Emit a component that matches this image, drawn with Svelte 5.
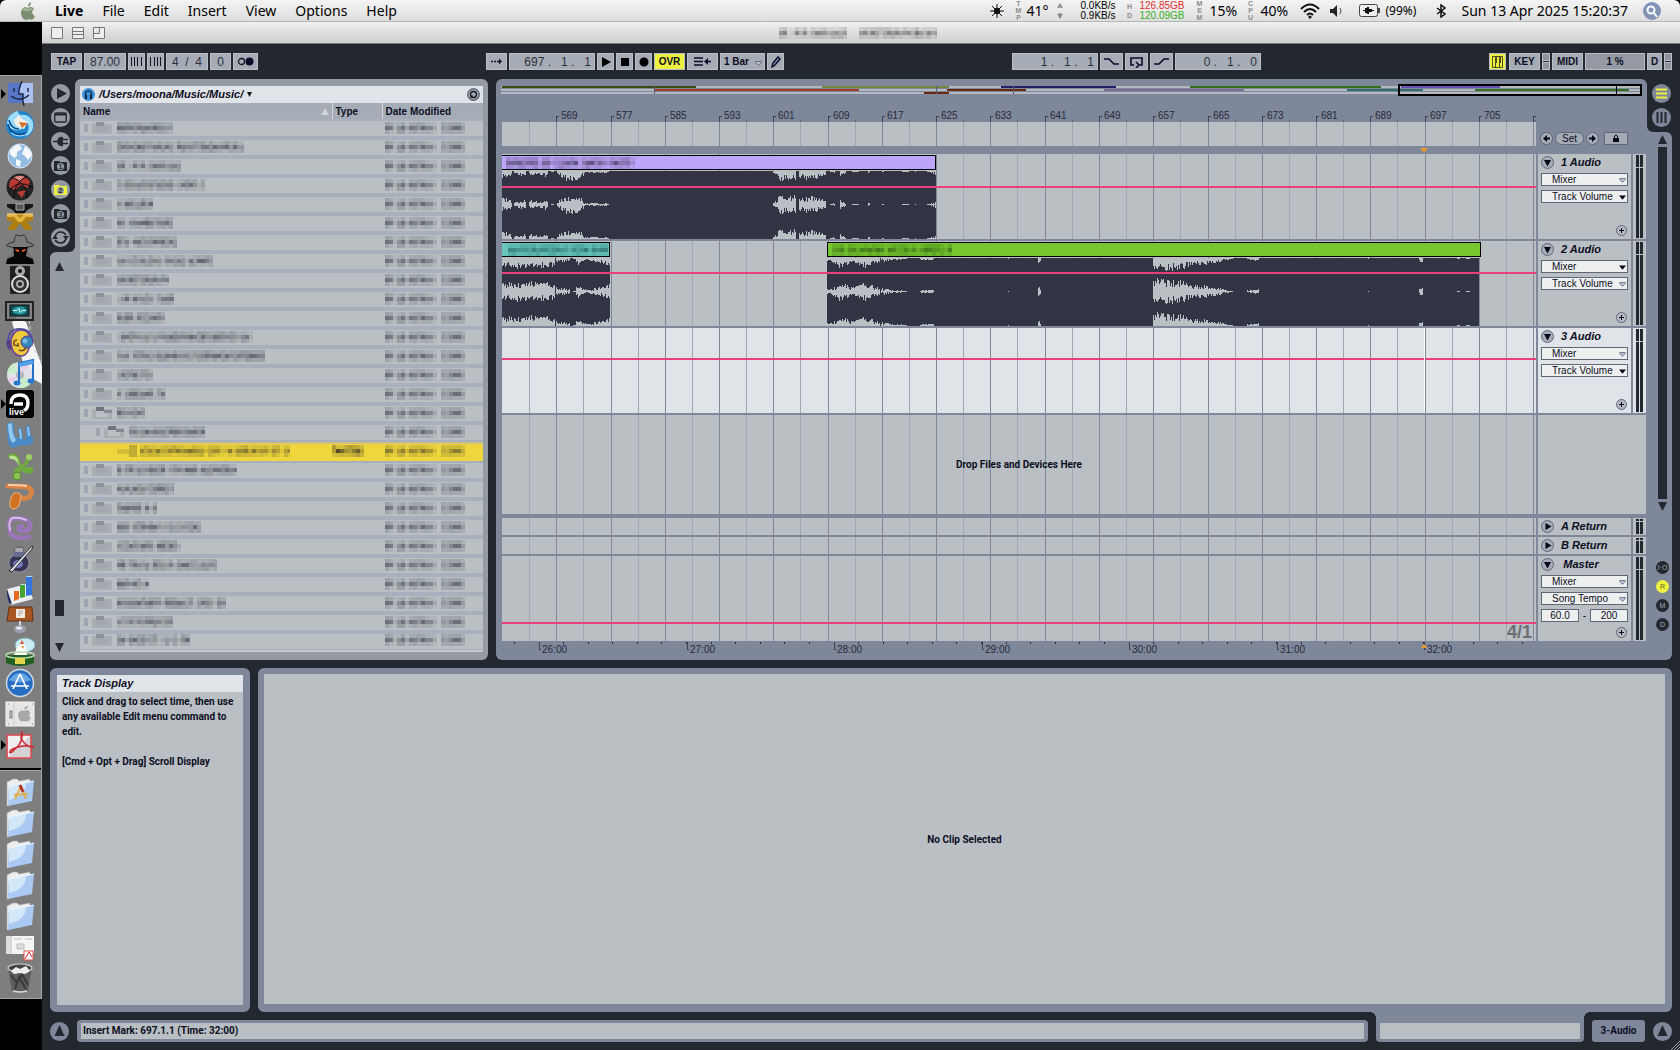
<script>
    const menus = ["File", "Edit", "Insert", "View", "Options", "Help"];

    // width, folder state and indent of every blurred browser entry
    const nameWidths = [
        56, 127, 64, 88, 36, 56, 60, 96, 52, 57, 48, 136, 148, 36, 49, 28, 76,
        150, 120, 57, 40, 84, 64, 100, 32, 109, 56, 73,
    ];
    const files = nameWidths.map((width, i) => ({
        width,
        indent: i === 16 ? 12 : i === 17 ? 33 : 0,
        open: i === 15 || i === 16,
        selected: i === 17,
    }));

    function noise(n) {
        const v = Math.sin(n * 127.1 + 11.7) * 43758.5453;
        return v - Math.floor(v);
    }

    function mosaic(width, seed, strength = 0.55) {
        const cells = [];
        for (let x = 0; x < width; x += 4) {
            const gap = noise(seed * 31 + x * 3) > 0.9 ? 0.35 : 1;
            for (let row = 0; row < 3; row++) {
                const base = row === 1 ? strength : strength * 0.4;
                const o = base * gap * (0.35 + 0.65 * noise(seed * 7 + x * 1.3 + row * 17));
                cells.push({ x, y: row * 4, w: Math.min(4, width - x), o: o.toFixed(2) });
            }
        }
        return cells;
    }

    const SPAN = 1034;
    const pct = (x, span = SPAN) => `${(x / span) * 100}%`;

    const bars = Array.from({ length: 20 }, (_, i) => ({
        x: Math.round(i * 54.27),
        label: i > 0 && i < 19 ? 561 + i * 8 : "",
    }));
    const barLabels = bars.filter((b) => b.label && b.label <= 705);

    const minutes = [26, 27, 28, 29, 30, 31, 32].map((m, i) => ({
        x: Math.round(37 + i * 147.5),
        label: `${m}:00`,
    }));
    const seconds = Array.from({ length: 42 }, (_, i) => Math.round(12 + i * 24.58));

    // waveform envelopes: [from, to, start level, end level]
    const waveA = [
        [0, 10, 9, 4], [12, 24, 3, 6], [27, 36, 5, 4], [36, 46, 3, 7], [49, 52, 1, 1],
        [55, 62, 3, 9], [62, 76, 10, 10], [76, 82, 9, 5], [82, 107, 2, 2],
        [271, 276, 2, 9], [276, 294, 10, 10], [297, 310, 8, 9], [310, 324, 9, 6],
        [328, 333, 1, 2], [338, 344, 7, 2], [350, 357, 1, 2], [366, 368, 2, 2],
        [380, 382, 1, 1], [400, 407, 1, 1], [413, 414, 1, 1], [425, 430, 1, 2],
        [430, 434, 2, 5],
    ];
    const waveB = [
        [0, 20, 10, 11], [20, 53, 12, 10], [54, 68, 5, 3], [71, 74, 1, 1], [74, 79, 8, 8],
        [79, 92, 4, 3], [92, 101, 5, 6], [101, 108, 7, 10],
    ];
    const waveC = [
        [0, 12, 3, 8], [12, 23, 10, 7], [23, 40, 5, 11], [40, 53, 9, 4], [54, 80, 4, 1],
        [93, 107, 2, 3], [181, 182, 1, 1], [211, 214, 7, 3], [326, 342, 15, 13],
        [342, 358, 13, 12], [358, 372, 10, 7], [372, 398, 8, 3], [398, 406, 3, 1],
        [420, 432, 2, 3], [541, 542, 1, 1], [592, 596, 5, 4], [630, 633, 1, 1], [639, 643, 1, 1],
    ];

    function wavePath(segments, seed) {
        let d = "";
        for (const [from, to, a, b] of segments) {
            for (let x = from; x < to; x++) {
                const level = a + ((b - a) * (x - from)) / Math.max(1, to - from);
                const peak = (n) => Math.max(1, Math.round(level * (0.35 + 0.65 * noise(n))));
                const up = peak(x + seed);
                const down = peak(x * 3 + seed);
                d += `M${x} ${34 - up}h1v${up + down - 1}h-1z`;
                d += `M${x} 0h1v${down}h-1z`;
                d += `M${x} ${68 - up}h1v${up}h-1z`;
            }
        }
        return d;
    }

    const tracks = [
        {
            name: "1 Audio",
            device: "Mixer",
            param: "Track Volume",
            live: "param",
            line: "line-a",
            clips: [{ x: 0, w: 434, body: 434, color: "violet", label: 129, labelX: 4, wave: waveA }],
        },
        {
            name: "2 Audio",
            device: "Mixer",
            param: "Track Volume",
            live: "device",
            line: "line-b",
            clips: [
                { x: 0, w: 108, body: 108, color: "teal", label: 100, labelX: 6, wave: waveB },
                { x: 325, w: 654, body: 652, color: "green", label: 120, labelX: 4, wave: waveC },
            ],
        },
        {
            name: "3 Audio",
            device: "Mixer",
            param: "Track Volume",
            live: "param",
            line: "line-c",
            selected: true,
            clips: [],
        },
    ];

    const overview = [
        [0, 1, 194, "#3c4a12"], [0, 321, 127, "#76863f"], [0, 500, 115, "#242067"],
        [0, 689, 191, "#34701c"], [0, 900, 99, "#6a51b4"], [1, 154, 204, "#9e3d20"],
        [1, 446, 79, "#68290f"], [1, 603, 140, "#7b6b97"], [1, 846, 76, "#2f6c6c"],
        [1, 974, 154, "#34701c"], [2, 423, 25, "#68290f"],
    ];

    const browserTabs = ["play", "device", "plug", "1", "2", "3", "swap"];
    const dockApps = [
        "finder", "fox", "globe", "red", "cross", "spy", "speaker", "tv", "ghost", "tunes",
        "live", "word", "excel", "power", "entourage", "ink", "charts", "keynote", "can",
        "store", "prefs", "pdf",
    ];
    const dockFiles = ["apps", "folder", "folder", "folder", "folder", "doc", "trash"];
    const running = ["finder", "live", "pdf"];
</script>

{#snippet blur(width, seed, strength)}
    <svg class="blur" width={width} height="12" aria-hidden="true" shape-rendering="crispEdges">
        {#each mosaic(width, seed, strength) as c}
            <rect x={c.x} y={c.y} width={c.w} height="4" opacity={c.o} />
        {/each}
    </svg>
{/snippet}

{#snippet grid()}
    <svg class="grid" viewBox="0 0 1034 10" preserveAspectRatio="none" shape-rendering="crispEdges">
        {#each bars as bar}
            <rect x={bar.x + 27} y="0" width="1" height="10" fill="#a1a7ae" />
            {#if bar.x}
                <rect x={bar.x} y="0" width="1" height="10" fill="#7f879b" />
            {/if}
        {/each}
    </svg>
{/snippet}

{#snippet fold(open)}
    <svg viewBox="0 0 13 13" width="13" height="13">
        <circle cx="6.5" cy="6.5" r="6" fill="#a5acb6" stroke="#5f6779" />
        <path d={open ? "M3 4h7L6.500 10.500z" : "M4.500 3v7L10.500 6.500z"} fill="#05051c" />
    </svg>
{/snippet}

{#snippet plus()}
    <button class="bare plus" aria-label="Add lane">
        <svg viewBox="0 0 11 11" width="11" height="11">
            <circle cx="5.500" cy="5.500" r="5" fill="#b4bac2" stroke="#5f6779" />
            <path d="M3 5.500h5M5.500 3v5" stroke="#05051c" />
        </svg>
    </button>
{/snippet}

{#snippet chooser(value, label, live)}
    <label class="chooser">
        <select aria-label={label}><option>{value}</option></select>
        <svg viewBox="0 0 7 5" width="7" height="5">
            {#if live}
                <path d="M0 0.500h7L3.500 4.800z" fill="#05051c" />
            {:else}
                <path d="M0.700 0.500h5.600v1L3.500 4.400 0.700 1.500z" fill="#b9c4d4" stroke="#5f6779" stroke-width="0.8" />
            {/if}
        </svg>
    </label>
{/snippet}

{#snippet dockIcon(name)}
    <svg viewBox="0 0 30 30" width="30" height="30">
        {#if name === "finder"}
            <path d="M3 4h25v20H3z" fill="#5676c8" />
            <path d="M17 4C14 11 14 15 15 16h4q-1 5-1 8h10V4z" fill="#a9c0f0" />
            <path d="M17 2c-3 7-4 10-3 13h4q-1 6 1 12M9 9v4M23 9v4M6 17q9 7 18-1" fill="none" stroke="#1b223d" stroke-width="1.4" />
        {:else if name === "fox"}
            <circle cx="15" cy="15" r="14" fill="#2184cc" />
            <path d="M2 13Q3 4 12 1l3 4q9-2 13 7 2 10-8 15 6-8 2-15-4 10-12 8-6-1-8-7z" fill="#9bdcff" />
            <path d="M9 10l5-5 3 4 6 3-4 7-8-3z" fill="#f5efe5" /><path d="M14 12l9 1-6 5z" fill="#d8742c" />
            <path d="M3 14q3 12 14 10M5 20q7 7 16 3M4 10q2 9 10 9" fill="none" stroke="#074b93" stroke-width="1.500" />
            <path d="M6 23q9 6 17 0" fill="none" stroke="#bfeaff" />
        {:else if name === "globe"}
            <circle cx="15" cy="15" r="12" fill="#93bbe4" stroke="#d7e6f6" />
            <path d="M5 9q6-6 10-5l2 4-5 3v4l-3 2-4-4zM20 5q6 4 7 9l-4 5-3-4-3-2zM11 18l5 2-1 6-4-2z" fill="#f4f8fc" />
        {:else if name === "red"}
            <circle cx="15" cy="15" r="13.500" fill="#242424" />
            <path d="M5 9q9-10 20 0l-2 7-7-3-6 5-6-3zM12 20l9-2-4 8z" fill="#b93a35" />
            <path d="M8 6q6-4 12-1l-5 4z" fill="#e48a84" />
            <path d="M3 19Q15 6 28 16M7 5q16 7 15 21M22 4Q8 11 9 27" fill="none" stroke="#0a0a0a" stroke-width="1" />
        {:else if name === "cross"}
            <path d="M2 1h26v3l-6 3-3 4h-8L8 7 2 4z" fill="#151515" /><path d="M11 1h8v6h-8z" fill="#555" stroke="#aaa" />
            <path d="M2 11h26v7h-6l6 9h-8l-5-7-5 7H2l6-9H2z" fill="#b07f14" />
            <path d="M2 11h9l4 4 4-4h9v3h-7l-4 5h-4l-4-5H2z" fill="#e3b440" /><path d="M2 11h26" stroke="#ffe08a" />
        {:else if name === "spy"}
            <path d="M9 8q1-8 3-7l3 1 3-1q3 0 4 7 8 2 6 4-13 4-26 0-2-2 7-4z" fill="#7b7b7b" stroke="#333" />
            <path d="M8 13h15l-2 9 7 3 1 5H1l1-5 7-3z" fill="#060606" /><path d="M10 15l4 1v2l-3-1zM21 15l-4 1v2l3-1z" fill="#ff5a21" />
            <path d="M8 14q2 7-6 10M23 14q-2 7 5 10" fill="none" stroke="#666" />
        {:else if name === "speaker"}
            <rect x="5" y="1" width="20" height="28" rx="1" fill="#202020" />
            <circle cx="15" cy="6" r="5" fill="#a9a9a9" /><circle cx="15" cy="6" r="2" fill="#111" />
            <circle cx="15" cy="19" r="9" fill="#ddd" /><circle cx="15" cy="19" r="7" fill="#333" />
            <circle cx="15" cy="19" r="4" fill="#aaa" /><circle cx="15" cy="19" r="2" fill="#222" />
        {:else if name === "tv"}
            <rect x="1" y="6" width="27" height="18" fill="#858585" stroke="#222" stroke-width="2" />
            <rect x="5" y="9" width="19" height="11" fill="#0e4c52" stroke="#111" />
            <ellipse cx="14.500" cy="14.500" rx="7" ry="4" fill="#2b9aa0" />
            <path d="M8 14.500h4l2-2 1 4 2-2h4" fill="none" stroke="#dff" stroke-width="1" /><path d="M4 22h8" stroke="#333" stroke-dasharray="1 1" />
        {:else if name === "ghost"}
            <path d="M7 10Q10 2 17 3q9 1 8 12-1 13-8 14-8 0-10-8-2-6 0-11z" fill="#f0cc3d" stroke="#6d4298" stroke-width="1.500" />
            <path d="M4 17Q1 2 15 2q12 0 12 13" fill="none" stroke="#56519c" stroke-width="2" />
            <circle cx="22" cy="15" r="6" fill="#3784bb" stroke="#5a3b88" /><circle cx="20" cy="14" r="2.500" fill="#75b8e5" />
            <path d="M4 13q-2 5 2 9" fill="none" stroke="#5a3b88" stroke-width="4" />
            <path d="M12 13q-4 0-3 5l4 1v-3M14 23q4 2 7-2" fill="none" stroke="#73461d" stroke-width="1.500" />
        {:else if name === "tunes"}
            <circle cx="15" cy="17" r="13" fill="#dfe3e7" /><path d="M15 17L2 15q2-8 7-10zM15 17l11 8q-5 6-12 5z" fill="#c9eccb" />
            <path d="M15 17L3 21l2 4zM15 17L20 5l4 3z" fill="#eccbed" /><circle cx="15" cy="17" r="4" fill="#b5b6be" />
            <path d="M14 25V5l14-3v21" fill="none" stroke="#2470c6" stroke-width="2" /><path d="M14 7l14-3" stroke="#53a2ea" stroke-width="4" />
            <ellipse cx="12" cy="25" rx="3.500" ry="2.500" fill="#2879cf" /><ellipse cx="26" cy="23" rx="3.500" ry="2.500" fill="#2879cf" />
        {:else if name === "live"}
            <rect x="1" y="1" width="28" height="28" rx="3" fill="#050505" />
            <path d="M6 15q0-9 9-9 8 0 8 8 0 8-7 8M9 15h9" fill="none" stroke="#fff" stroke-width="3.400" />
            <text x="4" y="26" class="live-text">live</text>
        {:else if name === "word"}
            <path d="M2 3l6-1 2 15 4 1-1-10h4l1 11 3 1V6h4l1 10q3 2 2 6-3 4-9 3l-6 1q-5 3-8 1Q2 22 2 3z" fill="#4a8ac6" />
            <path d="M3 4l4-1q0 11 4 17-3 5-5 1Q3 14 3 4zM14 9h2l1 10h-2zM22 7h2l1 9h-2z" fill="#8fc5ee" />
        {:else if name === "excel"}
            <path d="M3 4q8-4 11 3l2 7q4-1 5-7 3-5 6-2 2 4-3 5-1 5-6 6h10v6q-7 2-12-3-2 6-7 4-1-6 5-7-3-11-10-9z" fill="#6fa941" />
            <path d="M4 5q7-2 9 4l1 6q-3-8-9-7z" fill="#b9e38a" /><circle cx="12" cy="25" r="4" fill="#86c04f" stroke="#58882f" /><circle cx="24" cy="6" r="3" fill="#9dd168" />
        {:else if name === "power"}
            <path d="M3 4q12 0 19 1 6 2 4 8-2 4-9 3" fill="none" stroke="#d98444" stroke-width="5" stroke-linecap="round" />
            <path d="M3 3q12 0 19 1" fill="none" stroke="#f8cfa8" stroke-width="2" />
            <path d="M9 11q8-1 7 4l-2 9q-6 6-9 0-1-8 4-13z" fill="#cf7224" stroke="#f3b57b" />
        {:else if name === "entourage"}
            <path d="M24 24Q7 27 5 19T6 6Q17 4 23 8q4 4 1 8-6 4-10 1-1-4 3-4" fill="none" stroke="#9a76b8" stroke-width="4.600" stroke-linecap="round" stroke-linejoin="round" />
            <path d="M5 17Q3 9 7 5q8-1 14 2" fill="none" stroke="#d9c0ea" stroke-width="1.800" stroke-linecap="round" />
        {:else if name === "ink"}
            <ellipse cx="14" cy="19" rx="10" ry="9" fill="#353552" stroke="#8b8ba6" /><ellipse cx="14" cy="6" rx="5" ry="3" fill="#a5a8b3" stroke="#555" />
            <path d="M9 8h11v5H9z" fill="#686b8f" /><ellipse cx="13" cy="20" rx="5" ry="4" fill="#7a7ac0" /><path d="M4 27L26 3l2-1-1 3L7 28z" fill="#d9dfe8" stroke="#333" />
        {:else if name === "charts"}
            <path d="M2 14l20-5 6 15-22 6z" fill="#eceef1" /><path d="M2 14l5 15-3-1-2-8z" fill="#293060" />
            <path d="M9 16h5v8l-5 2z" fill="#e66b20" /><path d="M15 10h5v12l-5 1z" fill="#44a42d" /><path d="M21 2h6v18l-6 1z" fill="#3275df" />
            <path d="M21 2l1-1h6l-1 1zM15 10l1-1h5l-1 1z" fill="#b3d8ff" />
        {:else if name === "keynote"}
            <path d="M4 1h23l1 14H2z" fill="#a85722" stroke="#633112" /><path d="M11 3h9v9h-9z" fill="#f2ede3" />
            <path d="M13 5h5M13 7h5M13 9h3" stroke="#aaa" />
            <path d="M14 15h2v5h-2z" fill="#d7d8df" /><ellipse cx="15" cy="23" rx="6" ry="4" fill="#9ea2b1" /><ellipse cx="14" cy="22" rx="3" ry="1.500" fill="#e9e9f2" />
        {:else if name === "can"}
            <ellipse cx="20" cy="8" rx="10" ry="7" fill="#c9ebf4" stroke="#7eaeb9" /><path d="M9 18l3-8 5-4 4 4 1 8z" fill="#fff" /><path d="M15 7l2-4 2 4z" fill="#e25435" /><path d="M16 9h3l-1 3z" fill="#e8962e" />
            <path d="M1 18v8q14 6 28 0v-8z" fill="#216022" /><ellipse cx="15" cy="18" rx="14" ry="3" fill="none" stroke="#b9d7ac" stroke-width="1.500" /><path d="M10 21h10v6H10z" fill="#e3d64b" />
        {:else if name === "store"}
            <circle cx="15" cy="15" r="13.500" fill="#276dc2" stroke="#d1d9e3" stroke-width="1.500" /><path d="M4 12q11-14 22 0-11 5-22 0z" fill="#67a4e4" />
            <path d="M15 6L8 21M15 6l7 15M6 18h18" fill="none" stroke="#fff" stroke-width="1.700" />
        {:else if name === "prefs"}
            <rect x="1" y="3" width="28" height="24" fill="#e6e6e6" stroke="#f5f5f5" /><path d="M9 3v24" stroke="#ccc" /><rect x="5" y="12" width="2" height="7" fill="#ddd" stroke="#777" />
            <path d="M19 10q1-3 4-3-1 4-4 3zm0 2q5-3 6 2-2 3 1 5-3 5-7 3-5 2-6-6 1-6 6-4z" fill="#a8a8a8" />
            <path d="M3 5h1M27 5h1M3 25h1M27 25h1" stroke="#777" />
        {:else if name === "pdf"}
            <path d="M2 5h24v23H2z" fill="#d5d2d6" stroke="#dd4a50" stroke-width="1.500" /><path d="M3 6h22L3 27z" fill="#f0eef0" />
            <path d="M17 1q1 8-3 14L7 22q-4 2-1-2 10-6 23-3-8 1-13-9z" fill="none" stroke="#c92e35" stroke-width="1.600" />
        {:else if name === "doc"}
            <path d="M1 4h28v18H1z" fill="#f5f5f5" /><path d="M1 4h4v18H1z" fill="#ddd" /><path d="M6 4v18M9 7h8M20 7h7M12 12h7v5h-7z" fill="#ddd" stroke="#bbb" />
            <rect x="19" y="19" width="9" height="9" fill="#fff" stroke="#e34b4f" /><path d="M20 27l4-7 3 5" fill="none" stroke="#c33" />
        {:else if name === "trash"}
            <path d="M3 5h24l-4 23q-8 3-16 0z" fill="#5d5d5d" /><path d="M6 12l6 8 5-9 6 11M10 26l4-12 7 12" fill="none" stroke="#3a3a3a" stroke-width="2" />
            <ellipse cx="15" cy="5" rx="12" ry="4" fill="#444" stroke="#d2d2d2" stroke-width="1.200" /><path d="M6 8l5-4 4 2 6-3 4 5-5 3-5-1-6 1z" fill="#eee" />
            <path d="M8 28q7 2 14 0" fill="none" stroke="#ddd" stroke-width="1.500" />
        {:else}
            <path d="M2 5l6-3h4l2 2 11-2v4L4 12v17H2z" fill="#ededed" stroke="#aaa" stroke-width="0.600" />
            <path d="M4 9l25-5-2 20L3 29z" fill="#abcaf3" /><path d="M4 9l17-3q0 13-17 17z" fill="#d2e8f9" /><path d="M4 9l25-5" stroke="#edf7ff" />
            {#if name === "apps"}
                <path d="M16 9l-6 13M9 18l14-1" fill="none" stroke="#dfae50" stroke-width="2" /><path d="M16 9l5 13" stroke="#dfae50" stroke-width="2" /><path d="M15 8l3 7" stroke="#b5332d" stroke-width="3" />
            {/if}
        {/if}
    </svg>
{/snippet}

<div class="desktop">
    <header class="menubar">
        <nav>
            <a class="apple" href="#apple" aria-label="Apple menu">
                <svg viewBox="0 0 14 18" width="14" height="18">
                    <path d="M7 5Q7 1 10 0q0 4-3 5zM7 6c3-2 5-1 6 1-3 2-2 6 1 7-1 3-3 5-6 3-5 3-8-2-8-6s3-7 7-5z" fill="#7b8f70" />
                    <path d="M1 8q3-4 6-1 3-2 5 0-5 4-11 1z" fill="#a3b39a" />
                </svg>
            </a>
            <a class="app" href="#live">Live</a>
            {#each menus as menu}<a href="#{menu}">{menu}</a>{/each}
        </nav>
        <div class="status-items">
            <svg viewBox="0 0 14 14" width="14" height="14">
                <circle cx="7" cy="7" r="3.200" fill="#111" /><path d="M7 0v14M0 7h14M2 2l10 10M12 2L2 12" stroke="#111" />
            </svg>
            <span class="stack">T<br />M<br />P</span><span class="temp">41°</span>
            <svg viewBox="0 0 8 16" width="8" height="16"><path d="M4 0l3 5H5L4 4 3 5H1zM4 16l3-5H5v-1H3v1H1z" fill="#8c8c8c" /></svg>
            <span class="pair net"><span>0.0KB/s</span><span>0.9KB/s</span></span>
            <span class="stack hd">H<br />D</span>
            <span class="pair disk"><span class="used">126.85GB</span><span class="free">120.09GB</span></span>
            <span class="stack mem">M<br />E<br />M</span><span class="pctg">15%</span>
            <span class="stack cpu">C<br />P<br />U</span><span class="pctg">40%</span>
            <svg class="wifi" viewBox="0 0 20 16" width="20" height="16">
                <path d="M1 6q9-9 18 0M4 9q6-6 12 0M7 12q3-3 6 0" fill="none" stroke="#111" stroke-width="2" /><circle cx="10" cy="14" r="1.600" fill="#111" />
            </svg>
            <svg class="sound" viewBox="0 0 13 14" width="13" height="14"><path d="M0 5h3l4-4v12L3 9H0z" fill="#222" /><path d="M10 4q2 3 0 6" fill="none" stroke="#555" /></svg>
            <svg class="battery" viewBox="0 0 22 13" width="22" height="13">
                <rect x="0.500" y="0.500" width="18" height="12" rx="2" fill="#eee" stroke="#444" /><path d="M20 4v5" stroke="#444" stroke-width="2" />
                <path d="M4 6h2V4h2V3h2v2h3v1h2v1h-2v1h-3v2H8V9H6V7H4z" fill="#111" />
            </svg>
            <span class="charge">(99%)</span>
            <svg class="bt" viewBox="0 0 10 14" width="10" height="14"><path d="M1 4l8 6-4 3V1l4 3-8 6" fill="none" stroke="#111" stroke-width="1.500" /></svg>
            <time>Sun 13 Apr 2025 15:20:37</time>
            <button class="bare" aria-label="Search">
                <svg viewBox="0 0 18 18" width="18" height="18"><circle cx="9" cy="9" r="9" fill="#8293b8" /><circle cx="8" cy="8" r="3.500" fill="none" stroke="#fff" stroke-width="2" /><path d="M11 11l3 4" stroke="#fff" stroke-width="2" /></svg>
            </button>
        </div>
    </header>

    <div class="screen">
        <aside class="dock">
            <svg class="wallpaper" viewBox="0 0 42 80" width="42" height="80">
                <path d="M12 4q8-5 14 0l16 44v18Q31 60 26 56z" fill="#f6f6f6" /><path d="M29 2l4 28 9 14" fill="none" stroke="#ccc" stroke-dasharray="4 2" />
            </svg>
            {#each dockApps as app}
                <a href="#{app}" class="dock-item" class:running={running.includes(app)} aria-label={app}>{@render dockIcon(app)}</a>
            {/each}
            <hr />
            {#each dockFiles as item}
                <a href="#{item}" class="dock-item" aria-label={item}>{@render dockIcon(item)}</a>
            {/each}
        </aside>

        <main class="window">
            <div class="titlebar">
                <svg viewBox="0 0 54 12" width="54" height="12" fill="#eee" stroke="#777">
                    <path d="M0.500 0.500h11v11H0.500z" /><path d="M21.500 0.500h11v11h-11zM21.500 4.500h11M21.500 7.500h11" /><path d="M42.500 0.500h11v11h-11zM42.500 6.500h6v-6" />
                </svg>
                <div class="doc-title">{@render blur(68, 3, 0.5)}{@render blur(78, 9, 0.5)}</div>
            </div>

            <div class="toolbar">
                <div class="tools">
                    <button class="w31">TAP</button>
                    <input class="w42" aria-label="Tempo" value="87.00" />
                    <button class="w17" aria-label="Nudge down"><svg viewBox="0 0 13 9" width="13" height="9"><path d="M1.500 0v9M4.500 0v9M7.500 0v9M11.500 0v9" stroke="#15161f" /></svg></button>
                    <button class="w17" aria-label="Nudge up"><svg viewBox="0 0 13 9" width="13" height="9"><path d="M1.500 0v9M5.500 0v9M8.500 0v9M11.500 0v9" stroke="#15161f" /></svg></button>
                    <input class="w42" aria-label="Signature" value="4  /  4" />
                    <input class="w21" aria-label="Groove" value="0" />
                    <button class="w25" aria-label="Metronome"><svg viewBox="0 0 17 9" width="17" height="9"><circle cx="4.500" cy="4.500" r="3" fill="none" stroke="#15161f" stroke-width="1.300" /><circle cx="12.500" cy="4.500" r="4" fill="#0b0b2a" /></svg></button>
                </div>
                <div class="tools">
                    <button class="w21" aria-label="Follow"><svg viewBox="0 0 13 9" width="13" height="9"><path d="M1 4.500h2M4 4.500h2M7 4.500h3" stroke="#15161f" stroke-width="1.500" /><path d="M9 1.500l3 3-3 3z" fill="#15161f" /></svg></button>
                    <input class="w86 pos" aria-label="Position" value="697 .   1 .   1" />
                    <button class="w17" aria-label="Play"><svg viewBox="0 0 10 10" width="10" height="10"><path d="M1 0l9 5-9 5z" /></svg></button>
                    <button class="w17" aria-label="Stop"><svg viewBox="0 0 10 10" width="10" height="10"><path d="M1 1h8v8H1z" /></svg></button>
                    <button class="w17" aria-label="Record"><svg viewBox="0 0 10 10" width="10" height="10"><circle cx="5" cy="5" r="4.500" /></svg></button>
                    <button class="w31 on">OVR</button>
                    <button class="w31" aria-label="Back to arrangement"><svg viewBox="0 0 17 9" width="17" height="9"><path d="M0 1h9M0 4.500h9M0 8h9M12 4.500h5" stroke="#0b0b2a" stroke-width="1.600" /><path d="M14 1v7l-4-3.500z" fill="#0b0b2a" /></svg></button>
                    <label class="quant">
                        <select aria-label="Quantization"><option>1 Bar</option></select>
                        <svg viewBox="0 0 7 5" width="7" height="5"><path d="M0.700 0.500h5.600v1L3.500 4.400 0.700 1.500z" fill="#b9c4d4" stroke="#5f6779" /></svg>
                    </label>
                    <button class="w17" aria-label="Draw"><svg viewBox="0 0 10 12" width="10" height="12"><path d="M1 11l1-4 5-6 2 2-5 6z" fill="#8891b4" stroke="#0b0b2a" stroke-width="1.500" /></svg></button>
                </div>
                <div class="tools">
                    <input class="w86 pos" aria-label="Loop start" value="1 .   1 .   1" />
                    <button class="w23" aria-label="Punch in"><svg viewBox="0 0 15 9" width="15" height="9" fill="none" stroke="#0b0b2a" stroke-width="1.600"><path d="M0 2h5l5 5h5" /></svg></button>
                    <button class="w23" aria-label="Loop"><svg viewBox="0 0 15 12" width="15" height="12" fill="none" stroke="#0b0b2a" stroke-width="1.600"><path d="M5 9H2V2h11v7h-3M7 6l3 3-3 3" /></svg></button>
                    <button class="w23" aria-label="Punch out"><svg viewBox="0 0 15 9" width="15" height="9" fill="none" stroke="#0b0b2a" stroke-width="1.600"><path d="M0 7h5l5-5h5" /></svg></button>
                    <input class="w86 pos" aria-label="Loop length" value="0 .   1 .   0" />
                </div>
                <div class="tools">
                    <button class="w17 on keys" aria-label="Computer keyboard"><svg viewBox="0 0 11 12" width="11" height="12"><path d="M0.500 0.500h10v11H0.500zM3.500 6v6M7.500 6v6" fill="none" stroke="#4c4e1e" /><path d="M3 1h2v6H3zM7 1h2v6H7z" fill="#4c4e1e" /></svg></button>
                    <button class="w31">KEY</button><i class="io"></i>
                    <button class="w31">MIDI</button>
                    <output class="w60">1 %</output>
                    <button class="w15">D</button><i class="io"></i>
                </div>
            </div>

            <div class="upper">
                <section class="browser">
                    <div class="side">
                        <div class="tabs-wrap">
                            <div class="tabs">
                                {#each browserTabs as tab}
                                    <button class="bare" aria-label={tab}>
                                        <svg viewBox="0 0 19 19" width="19" height="19">
                                            <circle cx="9.500" cy="9.500" r="9.500" fill="#959ba3" />
                                            {#if tab === "play"}
                                                <path d="M6 4l10 5.500L6 15z" fill="#23282f" />
                                            {:else if tab === "device"}
                                                <rect x="3.700" y="5" width="11.600" height="9" rx="1.500" fill="none" stroke="#23282f" stroke-width="1.400" /><path d="M4 6.500h11" stroke="#23282f" stroke-width="2" />
                                            {:else if tab === "plug"}
                                                <path d="M2 9.500h5M12 7.500h5M12 11.500h5" stroke="#23282f" stroke-width="1.700" /><path d="M12 5v9q-5 1-6-4.500Q7 4 12 5z" fill="#23282f" />
                                            {:else if tab === "swap"}
                                                <path d="M4 9q1-5 6-5 3 0 5 3M15 10q-1 5-5 5-4 0-6-3" fill="none" stroke="#23282f" stroke-width="1.700" /><path d="M12 8h6l-3 4zM1 11h6l-3-4z" fill="#23282f" />
                                            {:else}
                                                <path d="M3 5h5l1 1h7v9H3z" fill={tab === "2" ? "#eef03f" : "#23282f"} />
                                                <circle cx="9.500" cy="10.500" r="3.500" fill="#959ba3" />
                                                <text x="9.500" y="13" text-anchor="middle" class="tab-num">{tab}</text>
                                            {/if}
                                        </svg>
                                    </button>
                                {/each}
                            </div>
                        </div>
                        <div class="scroller">
                            <svg viewBox="0 0 9 9" width="9" height="9"><path d="M4.500 0L9 9H0z" fill="#23282f" /></svg>
                            <div class="thumb"></div>
                            <svg viewBox="0 0 9 9" width="9" height="9"><path d="M4.500 9L9 0H0z" fill="#23282f" /></svg>
                        </div>
                    </div>
                    <div class="listing">
                        <div class="path">
                            <svg viewBox="0 0 13 13" width="13" height="13"><circle cx="6.500" cy="6.500" r="6.500" fill="#3b8fd6" /><path d="M3.500 9V6q0-3 3-3t3 3v3" fill="none" stroke="#0d2440" stroke-width="1.200" /><path d="M3 7h2v4H3zM8 7h2v4H8z" fill="#0d2440" /></svg>
                            <span>/Users/moona/Music/Music/</span>
                            <svg viewBox="0 0 5 5" width="5" height="5"><path d="M0 0h5L2.500 5z" fill="#111" /></svg>
                            <button class="bare find" aria-label="Search files"><svg viewBox="0 0 13 13" width="13" height="13"><circle cx="6.500" cy="6.500" r="5.700" fill="#a5acb6" stroke="#5f6779" stroke-width="1.500" /><circle cx="6.500" cy="6.500" r="3" fill="none" stroke="#15161f" stroke-width="1.300" /><path d="M3.500 9.500l2-2" stroke="#15161f" stroke-width="1.300" /></svg></button>
                        </div>
                        <table>
                            <thead>
                                <tr>
                                    <th>Name <svg viewBox="0 0 8 7" width="8" height="7"><path d="M4 0l4 7H0z" fill="#cfd3d8" /></svg></th>
                                    <th class="type">Type</th>
                                    <th class="date">Date Modified</th>
                                </tr>
                            </thead>
                            <tbody>
                                {#each files as file, i}
                                    <tr class:selected={file.selected}>
                                        <td>
                                            <div class="entry" style:padding-left="{4 + file.indent}px">
                                                {#if !file.selected}
                                                    <svg width="30" height="12" viewBox="0 0 30 12" shape-rendering="crispEdges">
                                                        <path d="M0 2h4v8H0z" fill="#9299ae" opacity="0.7" />
                                                        <path d="M8 2h20v10H8z" fill="#a9aeb2" /><path d="M12 4h12v6H12z" fill={file.open ? "#b9bfc3" : "#a3a8ae"} />
                                                        <path d="M12 0h8v4h-8z" fill={file.open ? "#6f757d" : "#8d9298"} />
                                                        {#if file.open}<path d="M20 3h8v3h-8z" fill="#858b92" />{/if}
                                                    </svg>
                                                {:else}
                                                    <svg width="20" height="12" viewBox="0 0 20 12"><path d="M0 4h12v5H0z" fill="#d3bd38" /><path d="M12 0h8v12h-8z" fill="#c2ab32" /></svg>
                                                {/if}
                                                {@render blur(file.width, i + 1, 0.5)}
                                            </div>
                                        </td>
                                        <td>{#if file.selected}{@render blur(32, 71, 0.75)}{/if}</td>
                                        <td><div class="stamp">{@render blur(52, 90, 0.5)}{@render blur(24, 95, 0.5)}</div></td>
                                    </tr>
                                {/each}
                            </tbody>
                        </table>
                    </div>
                </section>

                <section class="arrange">
                    <div class="arr-main">
                        <div class="overview">
                            {#each overview as [row, x, w, color]}
                                <i class="row{row}" style:left={pct(x, 1141)} style:width={pct(w, 1141)} style:background={color}></i>
                            {/each}
                            {#each [153, 435, 512] as x}<b style:left={pct(x, 1141)}></b>{/each}
                            <div class="view-box"><b></b></div>
                        </div>

                        <div class="ruler">
                            <div class="marks">
                                {#each bars as bar}
                                    {#if bar.x}<i class="tick" style:left={pct(bar.x)}></i>{/if}
                                    <i class="dot" style:left={pct(Math.min(bar.x + 27, SPAN - 1))}></i>
                                {/each}
                                {#each barLabels as bar}
                                    <span style:left={pct(bar.x + 5)}>{bar.label}</span>
                                {/each}
                            </div>
                        </div>

                        <div class="scrub">
                            <div class="lane">{@render grid()}</div>
                            <div class="locators">
                                <button class="bare" aria-label="Previous locator"><svg viewBox="0 0 13 13" width="13" height="13"><circle cx="6.500" cy="6.500" r="6" fill="#a5acb6" stroke="#5f6779" /><path d="M6 6.500h4" stroke="#05051c" stroke-width="2" /><path d="M7 3v7L3 6.500z" fill="#05051c" /></svg></button>
                                <button class="set">Set</button>
                                <button class="bare" aria-label="Next locator"><svg viewBox="0 0 13 13" width="13" height="13"><circle cx="6.500" cy="6.500" r="6" fill="#a5acb6" stroke="#5f6779" /><path d="M3 6.500h4" stroke="#05051c" stroke-width="2" /><path d="M6 3v7l4-3.500z" fill="#05051c" /></svg></button>
                                <button class="lock" aria-label="Lock envelopes"><svg viewBox="0 0 8 9" width="8" height="9"><path d="M1 4h6v4H1z" fill="#05051c" /><path d="M2.500 4V2q1.500-2 3 0v2" fill="none" stroke="#05051c" /></svg></button>
                            </div>
                        </div>
                        <div class="insert-mark">
                            <svg viewBox="0 0 8 5" width="8" height="5" style:left={pct(918)}><path d="M0 0h8L4 5z" fill="#e8962e" /></svg>
                        </div>

                        <div class="tracks">
                            {#each tracks as track, t}
                                <div class="track" class:selected={track.selected}>
                                    <div class="lane">
                                        {@render grid()}
                                        {#each track.clips as clip, c}
                                            <div class="clip {clip.color}" class:cut={clip.x === 0} style:left={pct(clip.x)} style:width={pct(clip.w)}>
                                                <div class="clip-head" style:padding-left="{clip.labelX}px">{@render blur(clip.label, t * 5 + c + 40, 0.6)}</div>
                                                <svg class="wave" viewBox="0 0 {clip.body} 68" preserveAspectRatio="none" shape-rendering="crispEdges" style:width={pct(clip.body, clip.w)}>
                                                    <path d={wavePath(clip.wave, t * 50 + c * 9)} />
                                                </svg>
                                            </div>
                                        {/each}
                                        <i class="envelope {track.line}"></i>
                                        {#if track.selected}<i class="cursor" style:left={pct(922)}></i>{/if}
                                    </div>
                                    <div class="head">
                                        <div class="title"><button class="bare" aria-label="Fold track">{@render fold(true)}</button><span>{track.name}</span></div>
                                        {@render chooser(track.device, "Device", track.live === "device")}
                                        {@render chooser(track.param, "Parameter", track.live === "param")}
                                        {@render plus()}
                                    </div>
                                    <div class="meter"><i></i><i></i></div>
                                </div>
                            {/each}
                            <div class="drop">
                                <div class="lane">{@render grid()}<p>Drop Files and Devices Here</p></div>
                                <div class="head"></div>
                            </div>
                        </div>

                        <div class="tracks mixdown">
                            {#each ["A Return", "B Return"] as name}
                                <div class="track return">
                                    <div class="lane">{@render grid()}</div>
                                    <div class="head"><div class="title"><button class="bare" aria-label="Unfold track">{@render fold(false)}</button><span>{name}</span></div></div>
                                    <div class="meter"><i></i><i></i></div>
                                </div>
                            {/each}
                            <div class="track">
                                <div class="lane">{@render grid()}<i class="envelope line-m"></i><span class="zoom">4/1</span></div>
                                <div class="head">
                                    <div class="title"><button class="bare" aria-label="Fold master">{@render fold(true)}</button><span>Master</span></div>
                                    {@render chooser("Mixer", "Device", false)}
                                    {@render chooser("Song Tempo", "Parameter", false)}
                                    <div class="range"><input aria-label="Minimum tempo" value="60.0" /><span>-</span><input aria-label="Maximum tempo" value="200" /></div>
                                    {@render plus()}
                                </div>
                                <div class="meter"><i></i><i></i></div>
                            </div>
                        </div>

                        <div class="timebar">
                            <div class="marks">
                                {#each seconds as x}<i class="sec" style:left={pct(x)}></i>{/each}
                                {#each minutes as m}
                                    <i class="min" style:left={pct(m.x)}></i><span style:left={pct(m.x + 3)}>{m.label}</span>
                                {/each}
                                <svg viewBox="0 0 6 4" width="6" height="4" style:left={pct(919)}><path d="M0 4h6L3 0z" fill="#e8962e" /></svg>
                            </div>
                        </div>
                    </div>

                    <div class="arr-rail">
                        <div class="views-wrap">
                            <div class="views">
                                <button class="bare" aria-label="Arrangement view"><svg viewBox="0 0 19 19" width="19" height="19"><circle cx="9.500" cy="9.500" r="9.500" fill="#7f879b" /><path d="M4 5.500h11M4 9.500h11M4 13.500h11" stroke="#eef03f" stroke-width="2.200" /></svg></button>
                                <button class="bare" aria-label="Session view"><svg viewBox="0 0 19 19" width="19" height="19"><circle cx="9.500" cy="9.500" r="9.500" fill="#7f879b" /><path d="M5.500 4v11M9.500 4v11M13.500 4v11" stroke="#23282f" stroke-width="2" /></svg></button>
                            </div>
                        </div>
                        <div class="rail-body">
                            <svg viewBox="0 0 9 9" width="9" height="9"><path d="M4.500 0L9 9H0z" fill="#23282f" /></svg>
                            <div class="bar"></div>
                            <svg viewBox="0 0 9 9" width="9" height="9"><path d="M4.500 9L9 0H0z" fill="#23282f" /></svg>
                            <div class="toggles">
                                <button>I·O</button><button class="lit">R</button><button>M</button><button>D</button>
                            </div>
                        </div>
                    </div>
                </section>
            </div>

            <div class="lower">
                <section class="info">
                    <h2>Track Display</h2>
                    <p>Click and drag to select time, then use any available Edit menu command to edit.</p>
                    <p>[Cmd + Opt + Drag] Scroll Display</p>
                </section>
                <section class="detail"><p>No Clip Selected</p></section>
            </div>

            <footer>
                <button class="bare" aria-label="Info view"><svg viewBox="0 0 19 19" width="19" height="19"><circle cx="9.500" cy="9.500" r="9.500" fill="#7f879b" /><path d="M9.500 3l5 11h-10z" fill="#23282f" /></svg></button>
                <div class="message"><span>Insert Mark: 697.1.1 (Time: 32:00)</span></div>
                <div class="tail"><span></span></div>
                <button class="chip">3-Audio</button>
                <button class="bare" aria-label="Detail view"><svg viewBox="0 0 19 19" width="19" height="19"><circle cx="9.500" cy="9.500" r="9.500" fill="#7f879b" /><path d="M9.500 3l5 11h-10z" fill="#23282f" /></svg></button>
                <svg class="grip" viewBox="0 0 9 9" width="9" height="9"><path d="M0 9l9-9M3 9l6-6M6 9l3-3" stroke="#9aa0aa" /></svg>
            </footer>
        </main>
    </div>
</div>

<style>
    :global(body) {
        background: #000;
    }

    .desktop {
        --dark: #23282f;
        --blue: #7f879b;
        --pane: #b9bfc3;
        --side: #959ba3;
        --ink: #0c0d22;
        display: flex;
        flex-direction: column;
        min-height: 100vh;
        font: 10px/13px "Liberation Sans", Arial, sans-serif;
        color: var(--ink);
    }

    .desktop * {
        box-sizing: border-box;
    }

    svg {
        display: block;
        flex: none;
    }

    button,
    input,
    select {
        margin: 0;
        padding: 0;
        border: 0;
        border-radius: 0;
        font: inherit;
        color: inherit;
        appearance: none;
    }

    .bare {
        display: block;
        flex: none;
        background: none;
    }

    p {
        margin: 0;
    }

    /* menu bar */
    .menubar {
        display: flex;
        justify-content: space-between;
        height: 22px;
        padding: 0 19px;
        background: linear-gradient(#f4f4f4, #dedede);
        border-bottom: 1px solid #b5b5b5;
        border-radius: 6px 6px 0 0;
        font: 14px/21px "Noto Sans", sans-serif;
        color: #000;
    }

    .menubar nav,
    .status-items {
        display: flex;
        align-items: center;
        white-space: nowrap;
    }

    .menubar nav {
        gap: 19px;
    }

    .menubar a {
        color: inherit;
        text-decoration: none;
    }

    .menubar .apple {
        margin: 0 1px 0 2px;
    }

    .app {
        font-weight: bold;
    }

    .stack {
        width: 8px;
        margin-left: 11px;
        font: bold 7px/7px "Liberation Sans", sans-serif;
        color: #8c8c8c;
        text-align: center;
    }

    .temp {
        width: 29px;
        margin-left: 4px;
    }

    .pair {
        display: flex;
        flex-direction: column;
        font: 10px/10px "Liberation Sans", sans-serif;
    }

    .net {
        width: 38px;
        margin-left: 17px;
    }

    .disk {
        width: 48px;
    }

    .hd {
        margin: 0 6px 0 7px;
        line-height: 9px;
    }

    .mem {
        margin-left: 8px;
    }

    .used {
        color: #e0322b;
    }

    .free {
        color: #37b020;
    }

    .pctg {
        width: 30px;
        margin-left: 6px;
    }

    .wifi {
        margin-left: 9px;
    }

    .sound {
        margin-left: 10px;
    }

    .battery {
        margin-left: 16px;
    }

    .charge {
        width: 34px;
        margin-left: 5px;
        font-size: 12px;
    }

    .bt {
        margin: 0 16px 0 16px;
    }

    .status-items time {
        margin-right: 15px;
    }

    .cpu {
        margin-left: 7px;
    }

    /* dock */
    .screen {
        display: flex;
        flex: 1;
    }

    .dock {
        position: relative;
        display: flex;
        flex: none;
        flex-direction: column;
        align-self: flex-start;
        width: 42px;
        margin-top: 53px;
        padding: 3px 0 4px;
        background: #7e7e7e;
        border: solid #a4a4a4;
        border-width: 1px 1px 1px 0;
    }

    .wallpaper {
        position: absolute;
        left: 0;
        top: 242px;
    }

    .dock-item {
        position: relative;
        display: block;
        height: 31px;
        padding-left: 5px;
    }

    .running::before {
        content: "";
        position: absolute;
        left: 1px;
        top: 10px;
        border: solid transparent;
        border-width: 5px 0 5px 5px;
        border-left-color: #000;
    }

    .dock hr {
        width: 100%;
        height: 3px;
        margin: 7px 0 6px;
        border: 0;
        background: #000;
        border-bottom: 1px solid #a4a4a4;
    }

    .live-text {
        font: bold 9px "Liberation Sans", sans-serif;
        fill: #fff;
        stroke: #050505;
        stroke-width: 2px;
        paint-order: stroke;
    }

    /* window */
    .window {
        display: flex;
        flex: 1;
        flex-direction: column;
        min-width: 0;
        background: var(--dark);
    }

    .titlebar {
        display: flex;
        align-items: center;
        height: 22px;
        padding: 0 9px;
        background: linear-gradient(#f0f0f0, #cfcfcf);
        border-bottom: 1px solid #777;
    }

    .doc-title {
        display: flex;
        flex: 1;
        justify-content: center;
        gap: 12px;
        margin-right: 60px;
    }

    .blur {
        fill: #15161f;
    }

    .toolbar {
        display: flex;
        justify-content: space-between;
        padding: 9px 8px 9px 9px;
    }

    .tools {
        display: flex;
        gap: 2px;
        height: 17px;
    }

    .tools button,
    .tools input,
    .tools output,
    .quant {
        display: flex;
        align-items: center;
        justify-content: center;
        height: 17px;
        background: #a5acb6;
        border: 1px solid #b9bfc8;
        font-weight: bold;
        text-align: center;
    }

    .tools input {
        font-size: 12px;
        font-weight: normal;
        color: #2d303c;
        white-space: pre;
    }

    .tools output {
        background: #9499a4;
    }

    .tools .pos {
        padding-right: 3px;
        text-align: right;
    }

    .tools .on {
        background: #eef03f;
    }

    .tools .keys {
        margin-right: 1px;
    }

    .w15 { width: 15px; }
    .w17 { width: 17px; }
    .w21 { width: 21px; }
    .w23 { width: 23px; }
    .w25 { width: 25px; }
    .w31 { width: 31px; }
    .w42 { width: 42px; }
    .w60 { width: 60px; }
    .w86 { width: 86px; }

    .quant {
        position: relative;
        width: 45px;
    }

    .quant select {
        width: 100%;
        height: 15px;
        padding-left: 3px;
        background: none;
        font-weight: bold;
    }

    .quant svg {
        position: absolute;
        right: 2px;
        bottom: 3px;
    }

    .io {
        width: 8px;
        background: linear-gradient(#8f949f 6px, #b9bfc8 6px 7px, var(--dark) 7px 8px, #b9bfc8 8px 9px, #8f949f 9px);
        border: 1px solid #b9bfc8;
    }

    /* browser */
    .upper {
        display: flex;
        gap: 8px;
        padding: 0 8px;
    }

    .browser {
        display: flex;
        flex: none;
        width: 438px;
    }

    .side {
        display: flex;
        flex-direction: column;
        width: 25px;
    }

    .tabs-wrap {
        background: linear-gradient(var(--dark) 60%, var(--side) 60%);
    }

    .tabs {
        display: flex;
        flex-direction: column;
        gap: 5px;
        padding: 5px 0 5px 1px;
        background: var(--dark);
        border-bottom-right-radius: 6px;
    }

    .tab-num {
        font: bold 7px "Liberation Sans", sans-serif;
        fill: #23282f;
    }

    .scroller {
        display: flex;
        flex: 1;
        flex-direction: column;
        align-items: flex-start;
        padding: 10px 5px 8px;
        background: var(--side);
        border-radius: 6px 0 0 6px;
    }

    .thumb {
        width: 9px;
        height: 16px;
        margin: auto 0 27px;
        background: var(--dark);
    }

    .listing {
        flex: 1;
        min-width: 0;
        padding: 7px 5px 7px;
        background: var(--side);
        border-radius: 6px 6px 6px 0;
    }

    .path {
        display: flex;
        align-items: center;
        gap: 4px;
        height: 17px;
        padding: 0 3px 0 2px;
        background: #e0e4e8;
        font-size: 11px;
        font-weight: bold;
        font-style: italic;
    }

    .find {
        margin-left: auto;
    }

    table {
        width: 100%;
        border-collapse: collapse;
        table-layout: fixed;
        background: var(--pane);
        border-bottom: 2px solid #c5cacd;
    }

    th {
        height: 16px;
        padding: 1px 3px 0;
        background: #a5acb6;
        text-align: left;
        line-height: 15px;
    }

    th + th {
        border-left: 1px solid #d3d7db;
    }

    th svg {
        float: right;
        margin-top: 4px;
    }

    .type {
        width: 50px;
    }

    .date {
        width: 101px;
    }

    td {
        height: 19px;
        padding: 0 0 2px;
        background: linear-gradient(#a9b0bd 2px, var(--pane) 2px 17px, #a9b0bd 17px);
    }

    .selected td {
        background: linear-gradient(#cfbf83 2px, #f0d63d 2px);
    }

    .entry,
    .stamp {
        display: flex;
        gap: 3px;
        padding-left: 3px;
    }

    .stamp {
        gap: 4px;
    }

    /* arrangement */
    .arrange {
        display: flex;
        flex: 1;
        min-width: 0;
    }

    .arr-main {
        flex: 1;
        min-width: 0;
        padding: 7px 1px 0 6px;
        background: var(--blue);
        border-radius: 6px 6px 0 6px;
    }

    .overview {
        position: relative;
        height: 8px;
        margin: 0 4px 0 -1px;
        background: linear-gradient(#b4b9bf 2px, var(--blue) 2px 3px, #b4b9bf 3px 5px, var(--blue) 5px 6px, #b4b9bf 6px);
    }

    .overview i,
    .overview b {
        position: absolute;
        height: 2px;
    }

    .overview b {
        top: 0;
        width: 1px;
        height: 8px;
        background: #555c6c;
    }

    .row0 { top: 0; }
    .row1 { top: 3px; }
    .row2 { top: 6px; }

    .view-box {
        position: absolute;
        top: -2px;
        right: 0;
        bottom: -2px;
        width: 21.4%;
        border: 2px solid #000;
    }

    .overview .view-box b {
        left: 90%;
        background: #000;
    }

    .ruler,
    .timebar {
        padding-right: 110px;
        color: #262a38;
    }

    .marks {
        position: relative;
        height: 28px;
    }

    .marks i,
    .marks span,
    .marks svg {
        position: absolute;
    }

    .marks span {
        top: 15px;
    }

    .tick {
        bottom: 0;
        width: 3px;
        height: 6px;
        border: solid #3d4354;
        border-width: 1px 0 0 1px;
    }

    .dot {
        bottom: 1px;
        width: 1px;
        height: 1px;
        background: #3d4354;
    }

    .scrub,
    .track,
    .drop {
        display: grid;
        grid-template-columns: minmax(0, 1fr) 93px 13px;
        gap: 2px;
    }

    .scrub {
        height: 24px;
    }

    .lane {
        position: relative;
        background: var(--pane);
        overflow: hidden;
    }

    .grid {
        position: absolute;
        width: 100%;
        height: 100%;
    }

    .locators {
        display: flex;
        grid-column: 2 / 4;
        gap: 2px;
        align-self: end;
        padding: 0 0 1px 2px;
    }

    .set,
    .lock {
        width: 29px;
        height: 13px;
        background: #a5acb6;
        border: 1px solid #5f6779;
        border-radius: 7px;
        line-height: 11px;
    }

    .lock {
        display: flex;
        justify-content: center;
        align-items: center;
        width: 24px;
        margin-left: 3px;
        border-radius: 0;
    }

    .insert-mark {
        position: relative;
        height: 8px;
        margin-right: 110px;
    }

    .insert-mark svg {
        position: absolute;
        bottom: 1px;
    }

    .tracks {
        display: flex;
        flex-direction: column;
        gap: 2px;
    }

    .mixdown {
        margin-top: 4px;
    }

    .track {
        height: 85px;
    }

    .return {
        height: 17px;
    }

    .track.selected > div {
        background: #e0e4e8;
    }

    .head,
    .meter {
        background: var(--pane);
    }

    .head {
        position: relative;
        display: flex;
        flex-direction: column;
        gap: 4px;
        padding: 2px 3px;
    }

    .title {
        display: flex;
        gap: 7px;
        font-size: 11px;
        font-weight: bold;
        font-style: italic;
    }

    .title span {
        flex: 1;
        padding-right: 27px;
        text-align: center;
        white-space: nowrap;
    }

    .return .title span {
        padding-right: 22px;
    }

    .chooser {
        position: relative;
        display: block;
        height: 13px;
    }

    .chooser select {
        display: block;
        width: 100%;
        height: 13px;
        padding: 0 0 0 10px;
        background: #eef0f0;
        border: 1px solid #5f6779;
        line-height: 11px;
    }

    .chooser svg {
        position: absolute;
        right: 2px;
        top: 5px;
    }

    .plus {
        position: absolute;
        right: 4px;
        bottom: 3px;
    }

    .range {
        display: flex;
        justify-content: space-between;
    }

    .range input {
        width: 38px;
        height: 13px;
        background: #eef0f0;
        border: 1px solid #5f6779;
        text-align: center;
    }

    .meter {
        display: flex;
        gap: 1px;
        padding: 1px 3px;
    }

    .meter i {
        width: 3px;
        background: linear-gradient(var(--dark) 12px, var(--pane) 12px 13px, var(--dark) 13px);
    }

    .return .meter i {
        background: linear-gradient(var(--dark) 2px, var(--pane) 2px 3px, var(--dark) 3px);
    }

    .clip {
        position: absolute;
        top: 1px;
        bottom: 0;
    }

    .clip-head {
        height: 15px;
        padding-top: 1px;
        border: 1px solid #000;
        overflow: hidden;
    }

    .cut .clip-head {
        border-left: 0;
    }

    .violet .clip-head { background: #bda5fb; }
    .teal .clip-head { background: #66c6bd; }
    .green .clip-head { background: #76c62f; }
    .green .blur { fill: #1c3d0b; }
    .teal .blur { fill: #144a4a; }

    .wave {
        height: 68px;
        margin-top: 1px;
        background: #323444;
        fill: #b9bfc3;
    }

    .envelope {
        position: absolute;
        left: 0;
        right: 0;
        height: 2px;
        background: #e8417a;
    }

    .line-a { top: 32px; }
    .line-b { top: 31px; }
    .line-c { top: 30px; }
    .line-m { top: 66px; }

    .cursor {
        position: absolute;
        top: 0;
        bottom: 0;
        width: 1px;
        background: #fff;
    }

    .drop {
        height: 99px;
    }

    .drop .lane {
        display: flex;
        align-items: center;
        justify-content: center;
    }

    .drop p {
        position: relative;
        font: bold 10px/13px Roboto, sans-serif;
    }

    .drop .head {
        grid-column: 2 / 4;
    }

    .zoom {
        position: absolute;
        right: 4px;
        bottom: 0;
        font-size: 18px;
        font-weight: bold;
        line-height: 17px;
        color: #6b6f74;
    }

    .timebar .marks {
        height: 19px;
    }

    .timebar .marks span {
        top: 2px;
    }

    .sec {
        top: 1px;
        width: 1px;
        height: 2px;
        background: #262a38;
    }

    .min {
        top: 1px;
        width: 2px;
        height: 8px;
        border: solid #3d4354;
        border-width: 0 0 1px 1px;
    }

    .timebar svg {
        top: 3px;
    }

    .arr-rail {
        display: flex;
        flex: none;
        flex-direction: column;
        width: 25px;
    }

    .views-wrap {
        background: linear-gradient(var(--dark) 50%, var(--blue) 50%);
    }

    .views {
        display: flex;
        flex-direction: column;
        gap: 5px;
        height: 53px;
        padding: 5px 0 0 5px;
        background: var(--dark);
        border-bottom-left-radius: 6px;
    }

    .rail-body {
        display: flex;
        flex: 1;
        flex-direction: column;
        align-items: center;
        gap: 3px;
        padding: 3px 3px 29px 9px;
        background: var(--blue);
        border-radius: 0 6px 6px 0;
    }

    .bar {
        flex: 1;
        width: 9px;
        background: var(--dark);
    }

    .toggles {
        display: flex;
        flex-direction: column;
        gap: 6px;
        margin-top: 47px;
    }

    .toggles button {
        width: 13px;
        height: 13px;
        background: var(--dark);
        border-radius: 50%;
        color: #a5acb6;
        font-size: 7px;
        line-height: 13px;
        text-align: center;
    }

    .toggles .lit {
        background: #eef03f;
        color: #5f6228;
    }

    /* lower panes */
    .lower {
        display: flex;
        flex: 1;
        gap: 8px;
        padding: 8px 8px 0;
        font: bold 10px/15px Roboto, sans-serif;
    }

    .info {
        flex: none;
        width: 200px;
        background: var(--pane);
        border: 7px solid var(--blue);
        border-radius: 6px;
    }

    .info h2 {
        margin: 0 0 2px;
        padding-left: 5px;
        background: #e0e4e8;
        font: italic bold 11px/17px "Liberation Sans", Arial, sans-serif;
    }

    .info p {
        padding-left: 5px;
    }

    .info p + p {
        margin-top: 15px;
    }

    .detail {
        display: flex;
        flex: 1;
        align-items: center;
        justify-content: center;
        background: var(--pane);
        border: solid var(--blue);
        border-width: 6px 7px 8px 6px;
        border-radius: 6px;
    }

    footer {
        position: relative;
        display: flex;
        align-items: flex-start;
        gap: 8px;
        height: 38px;
        padding: 8px 8px 0;
        font: bold 10px/16px Roboto, sans-serif;
    }

    footer .bare {
        margin: 2px 0 0;
    }

    .message,
    .tail {
        background: var(--blue);
        border-radius: 4px;
    }

    .message {
        flex: 1;
        height: 22px;
        padding: 3px 4px;
    }

    .message span {
        display: block;
        height: 16px;
        padding-left: 2px;
        background: var(--pane);
    }

    .tail {
        position: relative;
        width: 208px;
        height: 30px;
        margin-top: -8px;
        padding: 11px 4px 3px;
        border-radius: 0 0 4px 4px;
    }

    .tail::before,
    .tail::after {
        content: "";
        position: absolute;
        top: 0;
        width: 6px;
        height: 6px;
    }

    .tail::before {
        right: 100%;
        background: radial-gradient(circle at 0 100%, transparent 6px, var(--blue) 6px);
    }

    .tail::after {
        left: 100%;
        background: radial-gradient(circle at 100% 100%, transparent 6px, var(--blue) 6px);
    }

    .tail span {
        display: block;
        height: 16px;
        background: var(--pane);
    }

    .chip {
        width: 53px;
        height: 22px;
        background: var(--blue);
        border-radius: 3px;
    }

    .grip {
        position: absolute;
        right: 0;
        bottom: 0;
    }
</style>
